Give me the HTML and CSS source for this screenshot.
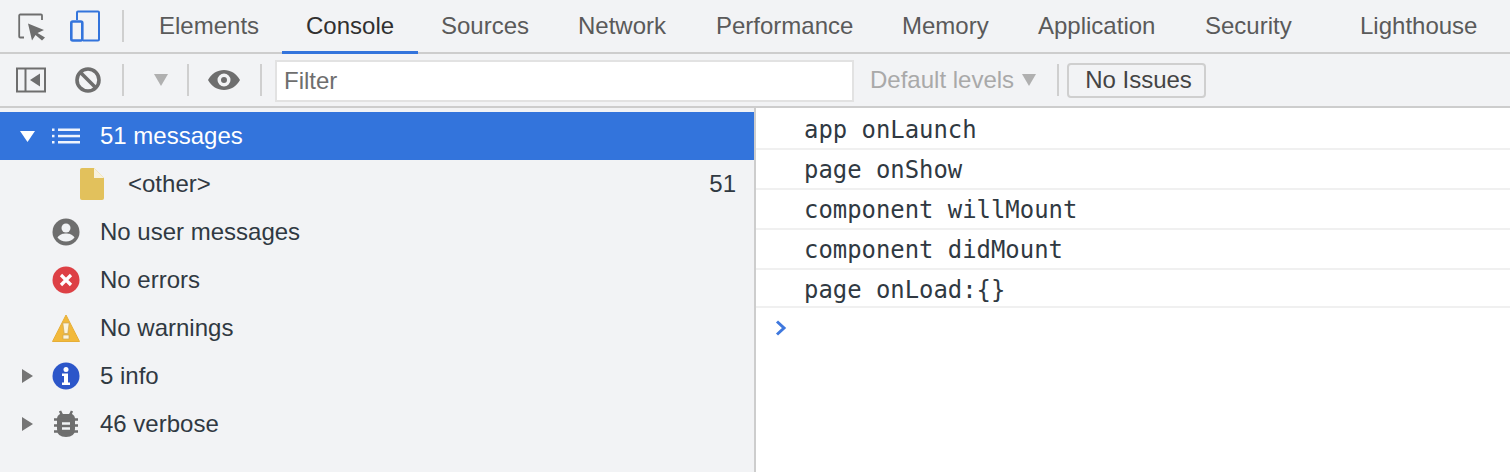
FILE: index.html
```html
<!DOCTYPE html>
<html lang="en">
<head>
<meta charset="utf-8">
<title>DevTools Console</title>
<link rel="stylesheet" href="styles.css">
</head>
<body>
<header class="tabbar">
  <div class="tool-icons">
    <svg class="ic-inspect" width="28" height="28" viewBox="0 0 28 28"><path d="M6 24.500H2.200A1 1 0 0 1 1.200 23.500V2.500A1 1 0 0 1 2.200 1.500H23A1 1 0 0 1 24 2.500V7" fill="none" stroke="#6e6e6e" stroke-width="1.800"/><path d="M10 10.500L26 17L19.500 20L27 24.500L24 27.500L17.500 22L14 27.500z" fill="#6e6e6e"/></svg>
    <svg class="ic-device" width="30" height="32" viewBox="0 0 30 32"><path d="M7 10V2.500A1 1 0 0 1 8 1.500H28A1 1 0 0 1 29 2.500V29.500A1 1 0 0 1 28 30.500H13" fill="none" stroke="#3374dc" stroke-width="2"/><rect x="1.300" y="11.500" width="11" height="19" rx="1.500" fill="none" stroke="#3374dc" stroke-width="2.600"/></svg>
    <span class="vsep"></span>
  </div>
  <nav class="tabs">
    <span class="tab t-elements">Elements</span>
    <span class="tab t-console active">Console</span>
    <span class="tab t-sources">Sources</span>
    <span class="tab t-network">Network</span>
    <span class="tab t-performance">Performance</span>
    <span class="tab t-memory">Memory</span>
    <span class="tab t-application">Application</span>
    <span class="tab t-security">Security</span>
    <span class="tab t-lighthouse">Lighthouse</span>
  </nav>
</header>
<div class="toolbar">
  <svg class="ic-sidebar" width="30" height="26" viewBox="0 0 30 26"><rect x="1" y="1.500" width="28" height="23" fill="none" stroke="#6e6e6e" stroke-width="2"/><path d="M9.500 1.500V24.500" stroke="#6e6e6e" stroke-width="2"/><path d="M24 6.500V19.500L14 13z" fill="#6e6e6e"/></svg>
  <svg class="ic-clear" width="28" height="28" viewBox="0 0 28 28"><circle cx="14" cy="14" r="11" fill="none" stroke="#6e6e6e" stroke-width="3.600"/><path d="M6.500 6.500L21.500 21.500" stroke="#6e6e6e" stroke-width="3.600"/></svg>
  <span class="vsep"></span>
  <svg class="ic-drop" width="14" height="12" viewBox="0 0 14 12"><path d="M0 0H14L7 12z" fill="#b0b0b0"/></svg>
  <span class="vsep"></span>
  <svg class="ic-eye" width="32" height="22" viewBox="0 0 32 22"><path fill-rule="evenodd" d="M0 11C3.500 4.500 9.500 1 16 1s12.500 3.500 16 10c-3.500 6.500-9.500 10-16 10S3.500 17.500 0 11zM16 4.500a6.500 6.500 0 1 0 0 13 6.500 6.500 0 0 0 0-13zM16 8a3 3 0 1 1 0 6 3 3 0 0 1 0-6z" fill="#6e6e6e"/></svg>
  <span class="vsep"></span>
  <div class="filter">Filter</div>
  <div class="levels">Default levels<svg width="14" height="12" viewBox="0 0 14 12"><path d="M0 0H14L7 12z" fill="#b0b0b0"/></svg></div>
  <span class="vsep"></span>
  <div class="issues">No Issues</div>
</div>
<main class="panes">
  <aside class="sidebar">
    <div class="row selected">
      <svg class="tri" width="15" height="11" viewBox="0 0 15 11"><path d="M0 0H15L7.500 11z" fill="#fff"/></svg>
      <svg class="ico" width="28" height="18" viewBox="0 0 28 18"><g fill="#fff" fill-opacity=".92"><rect x="0" y="1.500" width="2.500" height="2.500"/><rect x="0" y="7.800" width="2.500" height="2.500"/><rect x="0" y="14" width="2.500" height="2.500"/><rect x="6" y="1.500" width="22" height="2.500"/><rect x="6" y="7.800" width="22" height="2.500"/><rect x="6" y="14" width="22" height="2.500"/></g></svg>
      <span class="label">51 messages</span>
    </div>
    <div class="row file">
      <svg width="24" height="32" viewBox="0 0 24 32"><path d="M2 0H14L24 10V30a2 2 0 0 1-2 2H2a2 2 0 0 1-2-2V2a2 2 0 0 1 2-2z" fill="#e2c15c"/><path d="M14 0L24 10H14z" fill="#f8f2dc"/></svg>
      <span class="label file-label">&lt;other&gt;</span>
      <span class="count">51</span>
    </div>
    <div class="row">
      <svg class="ico" width="28" height="28" viewBox="0 0 28 28"><circle cx="14" cy="14" r="13.500" fill="#6e6e6e"/><circle cx="14" cy="10" r="4.500" fill="#f1f3f5"/><path d="M5.500 19.500C8 16 11 15.500 14 15.500s6 .5 8.500 4C20.500 22 17.500 23.500 14 23.500S7.500 22 5.500 19.500z" fill="#f1f3f5"/></svg>
      <span class="label">No user messages</span>
    </div>
    <div class="row">
      <svg class="ico" width="28" height="28" viewBox="0 0 28 28"><circle cx="14" cy="14" r="13.500" fill="#dd4045"/><path d="M9 9L19 19M19 9L9 19" stroke="#fff" stroke-width="3.200"/></svg>
      <span class="label">No errors</span>
    </div>
    <div class="row">
      <svg class="ico" width="28" height="28" viewBox="0 0 28 28"><path d="M14 1L27.500 27.500H.5z" fill="#f2b93b" stroke="#e6ae38" stroke-linejoin="round"/><path d="M10.800 9H17.200L15.800 19.500H12.200z" fill="#fbf3dc" stroke="#c9a556" stroke-width=".7"/><rect x="11" y="21" width="6" height="4" fill="#fbf3dc" stroke="#c9a556" stroke-width=".7"/></svg>
      <span class="label">No warnings</span>
    </div>
    <div class="row">
      <svg class="tri side" width="11" height="14" viewBox="0 0 11 14"><path d="M0 0L11 7L0 14z" fill="#757575"/></svg>
      <svg class="ico" width="28" height="28" viewBox="0 0 28 28"><circle cx="14" cy="14" r="13.500" fill="#2c56c9"/><circle cx="14" cy="7.500" r="2.500" fill="#fff"/><path d="M10 11.500h6v9h2v2.500h-8v-2.500h2v-6.500h-2z" fill="#fff"/></svg>
      <span class="label">5 info</span>
    </div>
    <div class="row">
      <svg class="tri side" width="11" height="14" viewBox="0 0 11 14"><path d="M0 0L11 7L0 14z" fill="#757575"/></svg>
      <svg class="ico" width="28" height="28" viewBox="0 0 28 28"><path d="M8 4h12q3 1.500 3 5v10q0 8-9 8t-9-8V9q0-3.500 3-5z" fill="#6e6e6e"/><path d="M8 1l2 4M20 1l-2 4" stroke="#6e6e6e" stroke-width="2.500"/><path d="M2 9.500h24M2 15.500h24M2 21.500h24" stroke="#6e6e6e" stroke-width="2.500"/><path d="M10 13.500h8M10 18.500h8" stroke="#f1f3f5" stroke-width="2.500"/></svg>
      <span class="label">46 verbose</span>
    </div>
  </aside>
  <section class="console">
    <div class="msg">app onLaunch</div>
    <div class="msg">page onShow</div>
    <div class="msg">component willMount</div>
    <div class="msg">component didMount</div>
    <div class="msg">page onLoad:{}</div>
    <div class="prompt"><svg width="12" height="16" viewBox="0 0 12 16"><path d="M2 1.500L9 8L2 14.500" fill="none" stroke="#3f78de" stroke-width="3"/></svg></div>
  </section>
</main>
</body>
</html>
```

FILE: styles.css
```css
* { box-sizing: border-box; }
html, body { margin: 0; height: 100%; }
body {
  width: 1510px;
  height: 472px;
  overflow: hidden;
  display: flex;
  flex-direction: column;
  font-family: "Liberation Sans", Arial, sans-serif;
  font-size: 24px;
  color: #303942;
  background: #fff;
}
svg { display: block; flex: none; }

.tabbar {
  height: 54px;
  flex: none;
  display: flex;
  background: #f2f3f5;
  border-bottom: 2px solid #cdcdcd;
}
.tool-icons { display: flex; align-items: center; padding-left: 18px; width: 124px; flex: none; }
.ic-inspect { margin-right: 24px; margin-top: 2px; }
.ic-device { margin-right: 22px; }
.vsep { width: 2px; height: 32px; background: #cfcfcf; flex: none; }
.tabs { display: flex; height: 54px; margin-left: 18px; }
.tab { height: 54px; line-height: 52px; color: #5a5a5a; white-space: nowrap; padding: 0 24px; }
.tab.active { color: #303030; border-bottom: 3px solid #3374dc; }
.t-elements { padding: 0 24px 0 17px; width: 140px; }
.t-console { width: 136px; }
.t-sources { width: 136px; padding-left: 23px; }
.t-network { width: 138px; }
.t-performance { width: 186px; }
.t-memory { width: 136px; }
.t-application { width: 168px; }
.t-security { width: 154px; padding-left: 23px; }
.t-lighthouse { padding-left: 24px; }

.toolbar {
  height: 54px;
  flex: none;
  display: flex;
  align-items: center;
  background: #f2f3f5;
  border-bottom: 2px solid #cdcdcd;
  padding-left: 16px;
}
.ic-clear { margin-left: 28px; }
.ic-clear + .vsep { margin-left: 20px; }
.ic-drop { margin-left: 30px; }
.ic-drop + .vsep { margin-left: 19px; }
.ic-eye { margin-left: 19px; }
.ic-eye + .vsep { margin-left: 20px; }
.filter {
  margin-left: 13px;
  margin-top: 2px;
  width: 579px;
  height: 42px;
  line-height: 38px;
  padding-left: 7px;
  background: #fff;
  border: 2px solid #e2e2e2;
  color: #6e6e6e;
}
.levels {
  margin-left: 16px;
  width: 187px;
  display: flex;
  align-items: center;
  gap: 8px;
  color: #a9a9a9;
}
.issues {
  margin-left: 8px;
  width: 139px;
  height: 35px;
  line-height: 30px;
  padding-left: 4px;
  text-align: center;
  border: 2px solid #cfcfcf;
  border-radius: 4px;
  color: #444;
}

.panes { flex: 1; display: flex; min-height: 0; }
.sidebar {
  width: 756px;
  flex: none;
  padding-top: 4px;
  background: #f2f3f5;
  border-right: 2px solid #cdcdcd;
  display: flex;
  flex-direction: column;
}
.row {
  height: 48px;
  flex: none;
  display: flex;
  align-items: center;
  padding-left: 52px;
  position: relative;
}
.row .label { margin-left: 20px; }
.row.selected { background: #3374dc; color: #fff; }
.tri { position: absolute; left: 20px; }
.tri.side { left: 22px; }
.file { padding-left: 80px; padding-right: 18px; }
.row .file-label { margin-left: 24px; }
.count { margin-left: auto; }

.console { flex: 1; min-width: 0; padding-top: 2px; }
.msg {
  height: 40px;
  padding: 0 0 0 48px;
  line-height: 40px;
  font-family: "DejaVu Sans Mono", monospace;
  font-size: 23.900px;
  color: #303942;
  border-bottom: 2px solid #f0f0f0;
}
.msg:nth-child(5) { height: 38px; }
.prompt { padding: 12px 0 0 19px; }
```
